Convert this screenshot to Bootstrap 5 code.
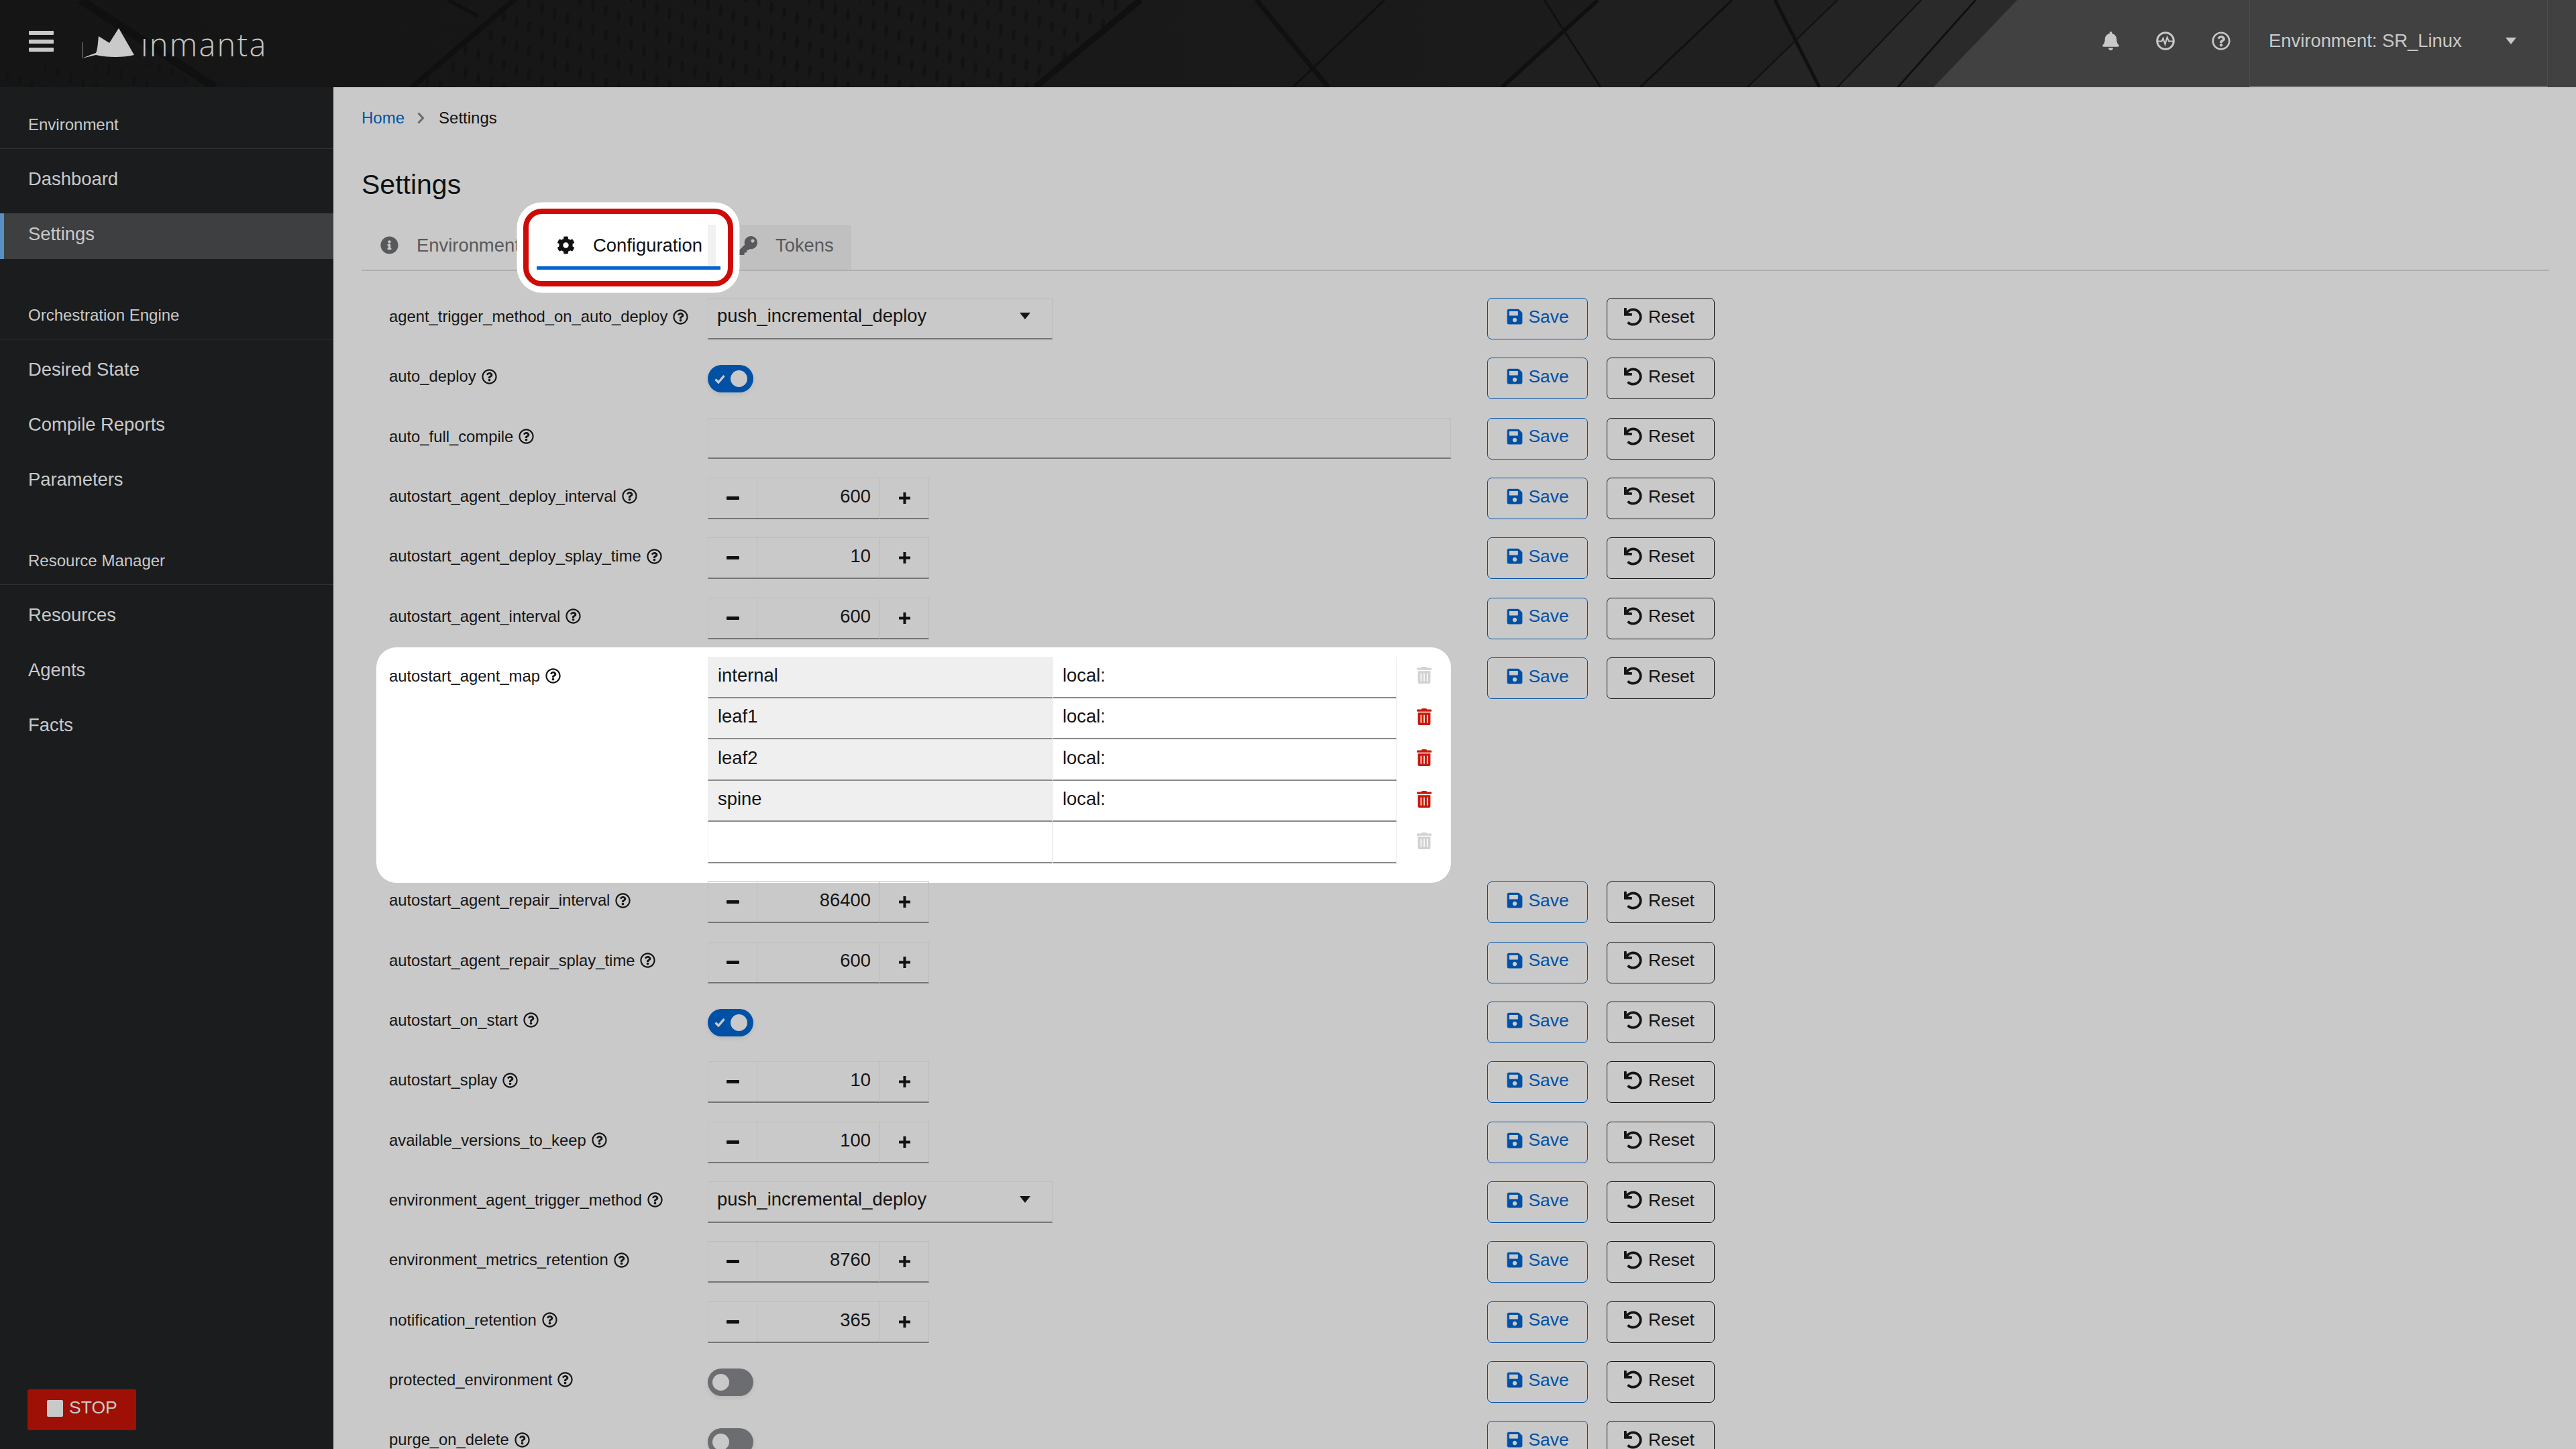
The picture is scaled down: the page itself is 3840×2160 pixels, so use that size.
<!doctype html>
<html lang="en">
<head>
<meta charset="utf-8">
<title>Settings</title>
<link href="https://cdn.jsdelivr.net/npm/bootstrap@5.3.0/dist/css/bootstrap.min.css" rel="stylesheet">
<style>
html,body{margin:0;width:3840px;height:2160px;overflow:hidden;background:#c9c9c9;font-family:"Liberation Sans",Arial,sans-serif;color:#111;}
.ico{display:block;fill:currentColor;flex:none;}
.topbar{height:130px;background:#171717;color:#c9c9c9;overflow:hidden;}
.topart{position:absolute;inset:0;width:3840px;height:130px;}
.topbar>*:not(.topart){position:relative;}
.burger{width:37px;height:31px;margin-left:43px;display:flex;flex-direction:column;justify-content:space-between;margin-bottom:7px;}
.burger i{display:block;height:6px;background:#c9c9c9;border-radius:1px;}
.brand{margin-left:43px;height:62px;width:272px;margin-bottom:6px;gap:3px;}
.brandname{font-family:"Open Sans",sans-serif;font-weight:300;font-size:47px;letter-spacing:2.2px;line-height:62px;color:#c4c4c4;margin-top:8px;}
.topicons{gap:55px;margin-right:28px;margin-bottom:8px;}
.envpick{width:445px;height:130px;padding:0 46px 7px 28px;border-left:1px solid #4c4c4c;border-right:1px solid #4c4c4c;border-bottom:2px solid #6e6e6e;font-size:27.4px;margin-right:42px;}
.tri{width:0;height:0;border-left:8.5px solid transparent;border-right:8.5px solid transparent;border-top:10px solid currentColor;}
.shell{height:2030px;}
.sidenav{width:497px;flex:none;background:#1a1c1e;color:#c9c9c9;padding-top:41px;}
.sechead{font-size:24px;line-height:30px;padding:0 42px 20px;border-bottom:1px solid #2f3133;margin-top:55px;margin-bottom:14px;}
.sechead.first{margin-top:0;}
.sideitem{display:flex;align-items:center;height:68px;padding:0 42px 6px;font-size:27.4px;margin-bottom:14px;color:#c9c9c9;text-decoration:none;}
.sideitem.on{background:#3d3f41;box-shadow:inset 6px 0 0 #5790c3;}
.stopbtn{width:162px;height:61px;margin:auto 0 28px 41px;background:#9e1005;color:#c9c9c9;border-radius:3px;font-size:26.5px;gap:9px;padding:0 0 5px 29px;display:flex;align-items:center;border:0;}
.stopbtn i{display:block;width:24px;height:25px;background:#c9c9c9;border-radius:2px;}
.content{flex:1;min-width:0;padding:28px 40px 0 42px;overflow:hidden;}
.crumbs{--bs-breadcrumb-margin-bottom:0;margin:0;font-size:24px;line-height:36px;align-items:center;}
.crumbs a{color:#0052a8;text-decoration:none;}
.crumbs .sep{width:13px;height:18px;margin:0 20px 0 18px;color:#6a6b6e;}
.pagetitle{font-size:41px;line-height:50px;font-weight:400;margin:56px 0 35px;color:#111;}
.tabline{height:69px;border-bottom:2px solid #aeaeae;--bs-nav-link-padding-x:0;}
.tabitem{display:flex;align-items:center;height:67px;padding-bottom:6px;font-size:27.4px;color:#58595c;}
.tabitem.t1{width:261px;padding-left:28px;gap:27px;}
.tabitem.t2{width:274px;padding-left:30px;gap:28px;color:#111;position:relative;}
.tabitem.t3{width:195px;padding-left:27px;gap:27px;background:#c0c0c0;}
.spot{position:absolute;left:-20px;top:-24px;right:-19px;bottom:-25px;background:#fff;border:8px solid #cf0b07;border-radius:28px;box-shadow:0 0 0 9.5px #fff;}
.spot b{position:absolute;left:267px;top:16px;width:12px;height:67px;background:#f1f1f1;}
.tabbody{position:relative;display:flex;align-items:center;gap:27px;}
.tabbar{position:absolute;left:0;right:0;bottom:0;height:5px;background:#0066cc;}
.setlist{padding-left:41px;margin-top:40px;gap:27.33px;}
.setrow{display:flex;align-items:flex-start;min-height:62px;}
.setmain{display:flex;align-items:flex-start;width:1583px;}
.setmain.lit{background:#fff;border-radius:30px;margin:-15px 0 -29px -19px;padding:15px 0 29px 19px;width:1602px;}
.setname{width:475px;flex:none;display:flex;align-items:center;gap:8px;font-size:23.8px;height:56px;line-height:56px;color:#151515;}
.hlp{width:23px;height:23px;}
.picker{width:514px;height:62px;display:flex;align-items:center;justify-content:space-between;padding:0 32px 7px 13px;font-size:27.4px;border:1px solid #bdbdbd;border-bottom:2px solid #757575;color:#151515;border-radius:0;background:transparent;}
.textbox{width:1108px;height:61px;border:1px solid #bdbdbd;border-bottom:2px solid #757575;border-radius:0;background:transparent;}
.switcher{width:68px;height:41px;margin-top:11px;border-radius:21px;background:#0050a5;display:flex;align-items:center;justify-content:space-between;padding:0 9px 0 10px;box-shadow:0 3px 6px rgba(0,0,0,.08);color:#c9c9c9;}
.switcher i{display:block;width:25px;height:25px;border-radius:50%;background:#c9c9c9;}
.switcher.off{background:#6c6d70;justify-content:flex-start;padding:0 0 0 7px;}
.stepper{width:330px;height:62px;flex-wrap:nowrap;}
.stepbtn{width:74px;height:62px;display:flex;align-items:center;justify-content:center;border:1px solid #bdbdbd;border-bottom:2px solid #757575;background:transparent;color:#111;border-radius:0;padding:0;}
.stepval{flex:1;height:62px;text-align:right;padding:0 14px 8px 0;font-size:27.4px;line-height:54px;border-top:1px solid #bdbdbd;border-bottom:2px solid #757575;color:#151515;}
.kvtable{width:1108px;margin-top:-1px;}
.kvline{display:flex;align-items:center;height:61.6px;}
.kvcell{width:514px;height:100%;padding:0 14px 5px;font-size:27.4px;display:flex;align-items:center;border:1px solid #efefef;border-top:0;border-bottom:2px solid #8a8a8a;color:#151515;}
.kvcell.keyed{background:#efefef;}
.kvcell.v{width:513px;}
.kvbin{margin-left:30px;color:#d2d2d2;margin-bottom:6px;}
.kvbin.live{color:#c9190b;}
.actbtn{display:flex;align-items:center;height:62px;font-size:26.4px;padding:0 0 6px;border-width:1.5px;border-style:solid;border-radius:7px;background:transparent;line-height:1;}
.actbtn.sv{width:150px;margin-left:54px;padding-left:27.5px;gap:9px;color:#0050a5;border-color:#0050a5;}
.actbtn.rs{width:161px;margin-left:28px;padding-left:24.5px;gap:9.5px;color:#151515;border-color:#151515;}
</style>
</head>
<body>
<svg width="0" height="0" class="position-absolute">
<defs>
<path id="p-q" d="M256 8C119.043 8 8 119.083 8 256c0 136.997 111.043 248 248 248s248-111.003 248-248C504 119.083 392.957 8 256 8zm0 448c-110.532 0-200-89.431-200-200 0-110.495 89.472-200 200-200 110.491 0 200 89.471 200 200 0 110.53-89.431 200-200 200zm107.244-255.2c0 67.052-72.421 68.084-72.421 92.863V300c0 6.627-5.373 12-12 12h-45.647c-6.627 0-12-5.373-12-12v-8.659c0-35.745 27.1-50.034 47.579-61.516 17.561-9.845 28.324-16.541 28.324-29.579 0-17.246-21.999-28.693-39.784-28.693-23.189 0-33.894 10.977-48.942 29.969-4.057 5.12-11.46 6.071-16.666 2.124l-27.824-21.098c-5.107-3.872-6.251-11.066-2.644-16.363C184.846 131.491 214.94 112 261.794 112c49.071 0 101.45 38.304 101.45 88.8zM298 368c0 23.159-18.841 42-42 42s-42-18.841-42-42 18.841-42 42-42 42 18.841 42 42z"/>
<path id="p-save" d="M433.941 129.941l-83.882-83.882A48 48 0 0 0 316.118 32H48C21.49 32 0 53.49 0 80v352c0 26.51 21.49 48 48 48h352c26.51 0 48-21.49 48-48V163.882a48 48 0 0 0-14.059-33.941zM224 416c-35.346 0-64-28.654-64-64 0-35.346 28.654-64 64-64s64 28.654 64 64c0 35.346-28.654 64-64 64zm96-304.52V212c0 6.627-5.373 12-12 12H76c-6.627 0-12-5.373-12-12V108c0-6.627 5.373-12 12-12h228.52c3.183 0 6.235 1.264 8.485 3.515l3.48 3.48A11.996 11.996 0 0 1 320 111.48z"/>
<path id="p-undo" d="M212.333 224.333H12c-6.627 0-12-5.373-12-12V12C0 5.373 5.373 0 12 0h48c6.627 0 12 5.373 12 12v78.112C117.773 39.279 184.26 7.47 258.175 8.007c136.906.994 246.448 111.623 246.157 248.532C504.041 393.258 393.12 504 256.333 504c-64.089 0-122.496-24.313-166.51-64.215-5.099-4.622-5.334-12.554-.467-17.42l33.967-33.967c4.474-4.474 11.662-4.717 16.401-.525C170.76 415.336 211.58 432 256.333 432c97.268 0 176-78.716 176-176 0-97.267-78.716-176-176-176-58.496 0-110.28 28.476-142.274 72.333h98.274c6.627 0 12 5.373 12 12v48c0 6.627-5.373 12-12 12z"/>
<path id="p-trash" d="M32 464a48 48 0 0 0 48 48h288a48 48 0 0 0 48-48V128H32zm272-256a16 16 0 0 1 32 0v224a16 16 0 0 1-32 0zm-96 0a16 16 0 0 1 32 0v224a16 16 0 0 1-32 0zm-96 0a16 16 0 0 1 32 0v224a16 16 0 0 1-32 0zM432 32H312l-9.4-18.7A24 24 0 0 0 281.1 0H166.8a23.72 23.72 0 0 0-21.4 13.3L136 32H16A16 16 0 0 0 0 48v32a16 16 0 0 0 16 16h416a16 16 0 0 0 16-16V48a16 16 0 0 0-16-16z"/>
</defs>
</svg>

<header class="topbar d-flex align-items-center position-relative">
<svg class="topart" viewBox="0 0 3840 130" preserveAspectRatio="none" aria-hidden="true">
<defs>
<linearGradient id="g1" x1="0" x2="1"><stop offset="0" stop-color="#151515"/><stop offset=".55" stop-color="#1a1a1a"/><stop offset=".72" stop-color="#1f1f1f"/></linearGradient>
<pattern id="dots" width="38" height="36" patternUnits="userSpaceOnUse" patternTransform="skewY(-28)"><ellipse cx="10" cy="10" rx="3" ry="9" fill="#101010"/><ellipse cx="29" cy="28" rx="3" ry="9" fill="#101010"/></pattern>
</defs>
<rect width="3840" height="130" fill="url(#g1)"/>
<polygon points="766,0 1700,0 1543,130 614,130" fill="url(#dots)" opacity=".7"/>
<polygon points="0,95 250,95 300,130 0,130" fill="url(#dots)" opacity=".5"/>
<polygon points="2382,0 3010,0 2885,130 2239,130" fill="#1f1f1f"/>
<polygon points="2739,0 3010,0 2885,130 2605,130" fill="#242424"/>
<polygon points="2864,0 3007,0 2882,130 2739,130" fill="#2a2a2a"/>
<polygon points="3007,0 3840,0 3840,130 2882,130" fill="#414141"/>
<g stroke="#101010" fill="none">
<line x1="766" y1="0" x2="614" y2="130" stroke-width="8"/>
<line x1="668" y1="0" x2="713" y2="24" stroke-width="5"/>
<line x1="120" y1="0" x2="320" y2="130" stroke-width="12"/>
<line x1="1700" y1="0" x2="1543" y2="130" stroke-width="9"/>
<line x1="1873" y1="0" x2="1980" y2="130" stroke-width="7"/>
<line x1="2064" y1="0" x2="1927" y2="130" stroke-width="3"/>
<line x1="2382" y1="0" x2="2239" y2="130" stroke-width="6"/>
<line x1="2302" y1="0" x2="2386" y2="130" stroke-width="3"/>
<line x1="2582" y1="0" x2="2445" y2="130" stroke-width="3"/>
<line x1="2646" y1="0" x2="2712" y2="130" stroke-width="5"/>
<line x1="2739" y1="0" x2="2605" y2="130" stroke-width="2"/>
<line x1="2864" y1="0" x2="2739" y2="130" stroke-width="2"/>
<line x1="2945" y1="0" x2="2829" y2="130" stroke-width="3"/>
</g>
</svg>
<div class="burger"><i></i><i></i><i></i></div>
<div class="brand d-flex align-items-center">
<svg width="84" height="62" viewBox="0 0 84 62" class="ico" aria-hidden="true"><path d="M.5 32V56" stroke="#8a8a8a" stroke-width="1" fill="none"/><path d="M0 56C8 52 14 50 20 48C23 41 23 30 24 23L40 33L54 11L77 51C60 55 38 55 20 51C14 52 7 54 0 56Z" fill="#c9c9c9"/></svg>
<span class="brandname">ınmanta</span>
</div>
<div class="ms-auto topicons d-flex align-items-center">
<svg class="ico" width="25" height="28" viewBox="0 0 448 512"><path d="M224 512c35.32 0 63.97-28.65 63.97-64H160.03c0 35.35 28.65 64 63.97 64zm215.39-149.71c-19.32-20.76-55.47-51.99-55.47-154.29 0-77.7-54.48-139.9-127.94-155.16V32c0-17.67-14.32-32-31.98-32s-31.98 14.33-31.98 32v20.84C118.56 68.1 64.08 130.3 64.08 208c0 102.3-36.15 133.53-55.47 154.29-6 6.45-8.66 14.16-8.61 21.71.11 16.4 12.98 32 32.1 32h383.8c19.12 0 32-15.6 32.1-32 .05-7.55-2.61-15.27-8.61-21.71z"/></svg>
<svg class="ico" width="28" height="28" viewBox="0 0 28 28"><circle cx="14" cy="14" r="12.3" fill="none" stroke="currentColor" stroke-width="3"/><path d="M3 14.5H8.5L10.5 10L13.5 19L16.5 8.5L19 14.5H25" fill="none" stroke="currentColor" stroke-width="2"/></svg>
<svg class="ico" width="28" height="28" viewBox="0 0 512 512"><use href="#p-q"/></svg>
</div>
<div class="envpick d-flex align-items-center justify-content-between"><span>Environment: SR_Linux</span><span class="tri"></span></div>
</header>

<div class="shell d-flex">
<nav class="sidenav d-flex flex-column">
<div class="sechead first">Environment</div>
<a class="sideitem" href="#">Dashboard</a>
<a class="sideitem on" href="#">Settings</a>
<div class="sechead">Orchestration Engine</div>
<a class="sideitem" href="#">Desired State</a>
<a class="sideitem" href="#">Compile Reports</a>
<a class="sideitem" href="#">Parameters</a>
<div class="sechead">Resource Manager</div>
<a class="sideitem" href="#">Resources</a>
<a class="sideitem" href="#">Agents</a>
<a class="sideitem" href="#">Facts</a>
<button class="stopbtn" type="button"><i></i>STOP</button>
</nav>

<main class="content">
<ol class="breadcrumb crumbs">
<li><a href="#">Home</a></li>
<li><svg class="sep ico" viewBox="0 0 13 18"><path d="M2.5 1.5L9.5 9L2.5 16.5" fill="none" stroke="currentColor" stroke-width="3"/></svg></li>
<li>Settings</li>
</ol>
<h1 class="pagetitle">Settings</h1>
<div class="nav tabline">
<div class="tabitem t1"><svg class="ico" width="27" height="27" viewBox="0 0 512 512"><path d="M256 8C119.043 8 8 119.083 8 256c0 136.997 111.043 248 248 248s248-111.003 248-248C504 119.083 392.957 8 256 8zm0 110c23.196 0 42 18.804 42 42s-18.804 42-42 42-42-18.804-42-42 18.804-42 42-42zm56 254c0 6.627-5.373 12-12 12h-88c-6.627 0-12-5.373-12-12v-24c0-6.627 5.373-12 12-12h12v-64h-12c-6.627 0-12-5.373-12-12v-24c0-6.627 5.373-12 12-12h64c6.627 0 12 5.373 12 12v100h12c6.627 0 12 5.373 12 12v24z"/></svg>Environment</div>
<div class="tabitem t2">
<div class="spot"><b></b></div>
<div class="tabbody"><svg class="ico" width="27" height="27" viewBox="0 0 512 512"><path d="M487.4 315.7l-42.6-24.6c4.3-23.2 4.3-47 0-70.2l42.6-24.6c4.9-2.8 7.1-8.6 5.5-14-11.1-35.6-30-67.8-54.7-94.6-3.8-4.1-10-5.1-14.8-2.3L380.8 110c-17.9-15.4-38.5-27.3-60.8-35.1V25.8c0-5.6-3.9-10.5-9.4-11.7-36.7-8.2-74.3-7.8-109.2 0-5.5 1.2-9.4 6.1-9.4 11.7V75c-22.2 7.9-42.8 19.8-60.8 35.1L88.7 85.5c-4.9-2.8-11-1.9-14.8 2.3-24.7 26.7-43.6 58.9-54.7 94.6-1.7 5.4.6 11.2 5.5 14L67.3 221c-4.3 23.2-4.3 47 0 70.2l-42.6 24.6c-4.9 2.8-7.1 8.6-5.5 14 11.1 35.6 30 67.8 54.7 94.6 3.8 4.1 10 5.1 14.8 2.3l42.6-24.6c17.9 15.4 38.5 27.3 60.8 35.1v49.2c0 5.6 3.9 10.5 9.4 11.7 36.7 8.2 74.3 7.8 109.2 0 5.5-1.2 9.4-6.1 9.4-11.7v-49.2c22.2-7.9 42.8-19.8 60.8-35.1l42.6 24.6c4.9 2.8 11 1.9 14.8-2.3 24.7-26.7 43.6-58.9 54.7-94.6 1.5-5.5-.7-11.3-5.6-14.1zM256 336c-44.1 0-80-35.9-80-80s35.9-80 80-80 80 35.9 80 80-35.9 80-80 80z"/></svg>Configuration</div>
<div class="tabbar"></div>
</div>
<div class="tabitem t3"><svg class="ico" width="28" height="28" viewBox="0 0 512 512"><path d="M512 176.001C512 273.203 433.202 352 336 352c-11.22 0-22.19-1.062-32.827-3.069l-24.012 27.014A23.999 23.999 0 0 1 261.223 384H224v40c0 13.255-10.745 24-24 24h-40v40c0 13.255-10.745 24-24 24H24c-13.255 0-24-10.745-24-24v-78.059c0-6.365 2.529-12.47 7.029-16.971l161.802-161.802C163.108 213.814 160 195.271 160 176 160 78.798 238.797.001 335.999 0 433.488-.001 512 78.511 512 176.001zM336 128c0 26.51 21.49 48 48 48s48-21.49 48-48-21.49-48-48-48-48 21.49-48 48z"/></svg>Tokens</div>
</div>

<div class="setlist d-flex flex-column" id="rows"></div>
</main>
</div>

<script>
const HELP='<svg class="ico hlp" viewBox="0 0 512 512"><use href="#p-q"/></svg>';
const ACTS='<button type="button" class="btn actbtn sv"><svg class="ico" width="24" height="26" viewBox="0 0 448 512"><use href="#p-save"/></svg>Save</button><button type="button" class="btn actbtn rs"><svg class="ico" width="27" height="27" viewBox="0 0 512 512"><use href="#p-undo"/></svg>Reset</button>';
const tog=on=>on?'<div class="switcher"><svg width="16" height="14" viewBox="0 0 16 14"><path d="M1.5 7.5L6 12L14.5 2" fill="none" stroke="currentColor" stroke-width="3.4"/></svg><i></i></div>':'<div class="switcher off"><i></i></div>';
const sel=()=>'<div class="picker"><span>push_incremental_deploy</span><span class="tri"></span></div>';
const num=v=>'<div class="input-group stepper"><button type="button" class="stepbtn"><svg width="19" height="5"><rect width="19" height="5" rx="1" fill="currentColor"/></svg></button><div class="stepval">'+v+'</div><button type="button" class="stepbtn"><svg width="19" height="19"><path d="M7.5 1h4v6.5H18v4h-6.5V18h-4v-6.5H1v-4h6.5z" fill="currentColor"/></svg></button></div>';
const bin=l=>'<svg class="ico kvbin'+(l?' live':'')+'" width="22" height="25" viewBox="0 0 448 512"><use href="#p-trash"/></svg>';
const kv=(k,v,l)=>'<div class="kvline"><div class="kvcell'+(k?' keyed':'')+'">'+k+'</div><div class="kvcell v">'+v+'</div>'+bin(l)+'</div>';
const rows=[
['agent_trigger_method_on_auto_deploy',sel()],
['auto_deploy',tog(1),1],
['auto_full_compile','<div class="textbox"></div>'],
['autostart_agent_deploy_interval',num(600)],
['autostart_agent_deploy_splay_time',num(10)],
['autostart_agent_interval',num(600)],
['autostart_agent_map','<div class="kvtable">'+kv('internal','local:',0)+kv('leaf1','local:',1)+kv('leaf2','local:',1)+kv('spine','local:',1)+kv('','',0)+'</div>',0,1],
['autostart_agent_repair_interval',num(86400)],
['autostart_agent_repair_splay_time',num(600)],
['autostart_on_start',tog(1),1],
['autostart_splay',num(10)],
['available_versions_to_keep',num(100)],
['environment_agent_trigger_method',sel()],
['environment_metrics_retention',num(8760)],
['notification_retention',num(365)],
['protected_environment',tog(0),1],
['purge_on_delete',tog(0),1]
];
document.getElementById('rows').innerHTML=rows.map(r=>'<div class="setrow"><div class="setmain'+(r[3]?' lit':'')+'"><div class="setname">'+r[0]+HELP+'</div>'+r[1]+'</div>'+ACTS+'</div>').join('');
</script>
<script src="https://cdn.jsdelivr.net/npm/bootstrap@5.3.0/dist/js/bootstrap.bundle.min.js"></script>
</body>
</html>
